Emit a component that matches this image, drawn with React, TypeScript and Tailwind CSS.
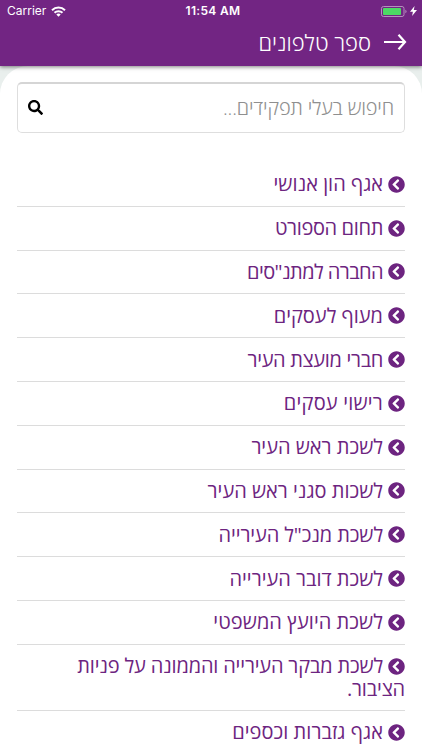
import { FaChevronCircleLeft, FaSearch } from "react-icons/fa";

const DEPARTMENTS = [
  { name: "אגף הון אנושי", tracking: "" },
  { name: "תחום הספורט", tracking: "tracking-[-0.36px]" },
  { name: "החברה למתנ\"סים", tracking: "tracking-[-0.57px]" },
  { name: "מעוף לעסקים", tracking: "" },
  { name: "חברי מועצת העיר", tracking: "tracking-[-0.33px]" },
  { name: "רישוי עסקים", tracking: "tracking-[0.2px]" },
  { name: "לשכת ראש העיר", tracking: "" },
  { name: "לשכות סגני ראש העיר", tracking: "" },
  { name: "לשכת מנכ\"ל העירייה", tracking: "tracking-[-0.1px]" },
  { name: "לשכת דובר העירייה", tracking: "" },
  { name: "לשכת היועץ המשפטי", tracking: "tracking-[0.05px]" },
  { name: "לשכת מבקר העירייה והממונה על פניות הציבור.", tracking: "tracking-[-0.17px]" },
  { name: "אגף גזברות וכספים", tracking: "tracking-[0.05px]" },
];

export default function App() {
  return (
    <div dir="rtl" className="h-screen overflow-hidden bg-[#e9efed] font-['Open_Sans',sans-serif]">
      {/* Header */}
      <header className="relative z-10 h-[66px] bg-[#722583] text-white shadow-[0_1px_4px_rgba(0,0,0,0.5)]">
        <StatusBar />
        <div className="flex h-10 items-center gap-3 pr-[15px]">
          <svg className="h-[18px] w-6" viewBox="0 0 24 18" fill="none" stroke="currentColor" strokeWidth="2.2">
            <path d="M1 9h21M15.5 1.8L22 9l-6.5 7.2" />
          </svg>
          <h1 className="text-[22px] font-light">ספר טלפונים</h1>
        </div>
      </header>

      <main className="h-full rounded-t-[28px] bg-white px-[17px] pt-4">
        {/* Search */}
        <div className="flex h-[51px] items-center justify-between rounded-[5px] border border-t-2 border-[#dedede] border-t-[#d5d5d5] pr-2.5 pl-[9px]">
          <input
            className="w-72 bg-transparent text-[20px] font-light tracking-[-0.15px] outline-none placeholder:text-[#8f8f8f]"
            placeholder="חיפוש בעלי תפקידים..."
          />
          <FaSearch className="mb-px ml-px text-black" size={15} />
        </div>

        {/* Departments */}
        <ul className="mt-[30px] text-[20px] text-[#6d2480]">
          {DEPARTMENTS.map((item) => (
            <li key={item.name} className="border-b border-[#dcdcdc] pt-[10.4px] pb-[10px] leading-[22.4px]">
              <FaChevronCircleLeft className="ml-[5px] inline-block align-[-1.5px]" size={17} />
              <span className={item.tracking}>{item.name}</span>
            </li>
          ))}
        </ul>
      </main>
    </div>
  );
}

function StatusBar() {
  return (
    <div dir="ltr" className="grid h-[22px] grid-cols-3 items-center pr-[5px] pl-[7px] font-['Inter',sans-serif] text-[12px]">
      <div className="flex items-center gap-[5px]">
        <span>Carrier</span>
        <svg className="h-[11px] w-[15px]" viewBox="0 0 15 11" fill="none" stroke="currentColor" strokeWidth="2">
          <path d="M1 4.2a9.3 9.3 0 0 1 13 0" />
          <path d="M3.5 6.8a5.7 5.7 0 0 1 8 0" />
          <path d="M7.5 10.8L5.3 8.6a3.1 3.1 0 0 1 4.4 0z" fill="currentColor" stroke="none" />
        </svg>
      </div>
      <span className="pl-0.5 text-center font-semibold tracking-[0.3px]">11:54 AM</span>
      <div className="flex items-center justify-end gap-[3px]">
        <svg className="h-[11px] w-[26px]" viewBox="0 0 26 11" fill="none">
          <rect x="0.5" y="0.5" width="22.5" height="10" rx="2" stroke="#b58fbe" />
          <rect x="2" y="2" width="18" height="7" rx="0.8" fill="#4cd964" />
          <path d="M24.4 3.7a2 2 0 0 1 0 3.6z" fill="#b58fbe" />
        </svg>
        <svg className="h-[10px] w-[7px]" viewBox="0 0 7 10" fill="currentColor">
          <path d="M4.6 0L0 5.7h2.9L2.1 10L7 4.1H3.8z" />
        </svg>
      </div>
    </div>
  );
}
